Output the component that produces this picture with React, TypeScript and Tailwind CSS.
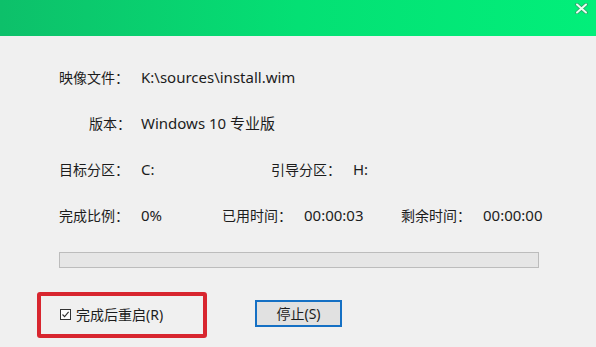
import React from 'react';

const font = { fontFamily: '"Noto Sans", "Noto Sans CJK SC", sans-serif' };

const Field: React.FC<{ label: string; value: string; valueWidth?: string; right?: boolean }> = ({ label, value, valueWidth = '', right }) => (
  <div className="flex items-center">
    <span className={`w-[82px] whitespace-nowrap ${right ? 'text-right pr-[10px]' : ''}`}>{label}</span>
    <span className={`whitespace-nowrap text-[15px] ${valueWidth}`}>{value}</span>
  </div>
);

const CloseIcon = () => (
  <svg width="13" height="11" viewBox="0 0 13 11">
    <path d="M2 1.5 L11 9.5 M11 1.5 L2 9.5" stroke="#2f9e66" strokeWidth="3.6" strokeLinecap="round" />
    <path d="M2 1.5 L11 9.5 M11 1.5 L2 9.5" stroke="#e6fff1" strokeWidth="2" strokeLinecap="round" />
  </svg>
);

const App: React.FC = () => {
  return (
    <div className="w-[596px] h-[347px] bg-[#f0f0f0] text-[#1c1c1c] text-[14px] overflow-hidden flex flex-col" style={font}>
      {/* title bar */}
      <header className="h-[36px] shrink-0 bg-gradient-to-r from-[#0dc06a] via-[#04e074] to-[#02ef7a] flex justify-end items-start pr-[8px] pt-[3px]">
        <CloseIcon />
      </header>

      <div className="flex flex-col pl-[59px] pt-[18px]">
        <div className="h-[46px] flex items-center">
          <Field label="映像文件：" value="K:\sources\install.wim" />
        </div>
        <div className="h-[46px] flex items-center">
          <Field label="版本：" value="Windows 10 专业版" right />
        </div>
        <div className="h-[46px] flex items-center">
          <Field label="目标分区：" value="C:" valueWidth="w-[130px]" />
          <Field label="引导分区：" value="H:" />
        </div>
        <div className="h-[46px] flex items-center">
          <Field label="完成比例：" value="0%" valueWidth="w-[81px]" />
          <Field label="已用时间：" value="00:00:03" valueWidth="w-[97px]" />
          <Field label="剩余时间：" value="00:00:00" />
        </div>

        {/* progress bar */}
        <div className="mt-[14px] w-[480px] h-[16px] border border-[#bcbcbc] bg-[#e6e6e6]" />
      </div>

      <div className="flex items-center pl-[37px] mt-[24px]">
        <div className="w-[170px] h-[46px] border-[4px] border-[#d8262f] rounded-[3px] flex items-center pl-[19px] pb-[2px]">
          <span className="w-[11px] h-[11px] border border-[#333] bg-white flex items-center justify-center mr-[5px]">
            <svg width="9" height="9" viewBox="0 0 9 9">
              <path d="M1.5 4.5 L3.6 6.7 L7.6 1.8" fill="none" stroke="#333" strokeWidth="1.1" />
            </svg>
          </span>
          <span className="whitespace-nowrap">完成后重启(R)</span>
        </div>
        <button className="ml-[48px] w-[87px] h-[27px] border-2 border-[#1570c4] bg-[#e1e1e1] flex items-center justify-center mb-[3px]">
          停止(S)
        </button>
      </div>
    </div>
  );
};

export default App;
